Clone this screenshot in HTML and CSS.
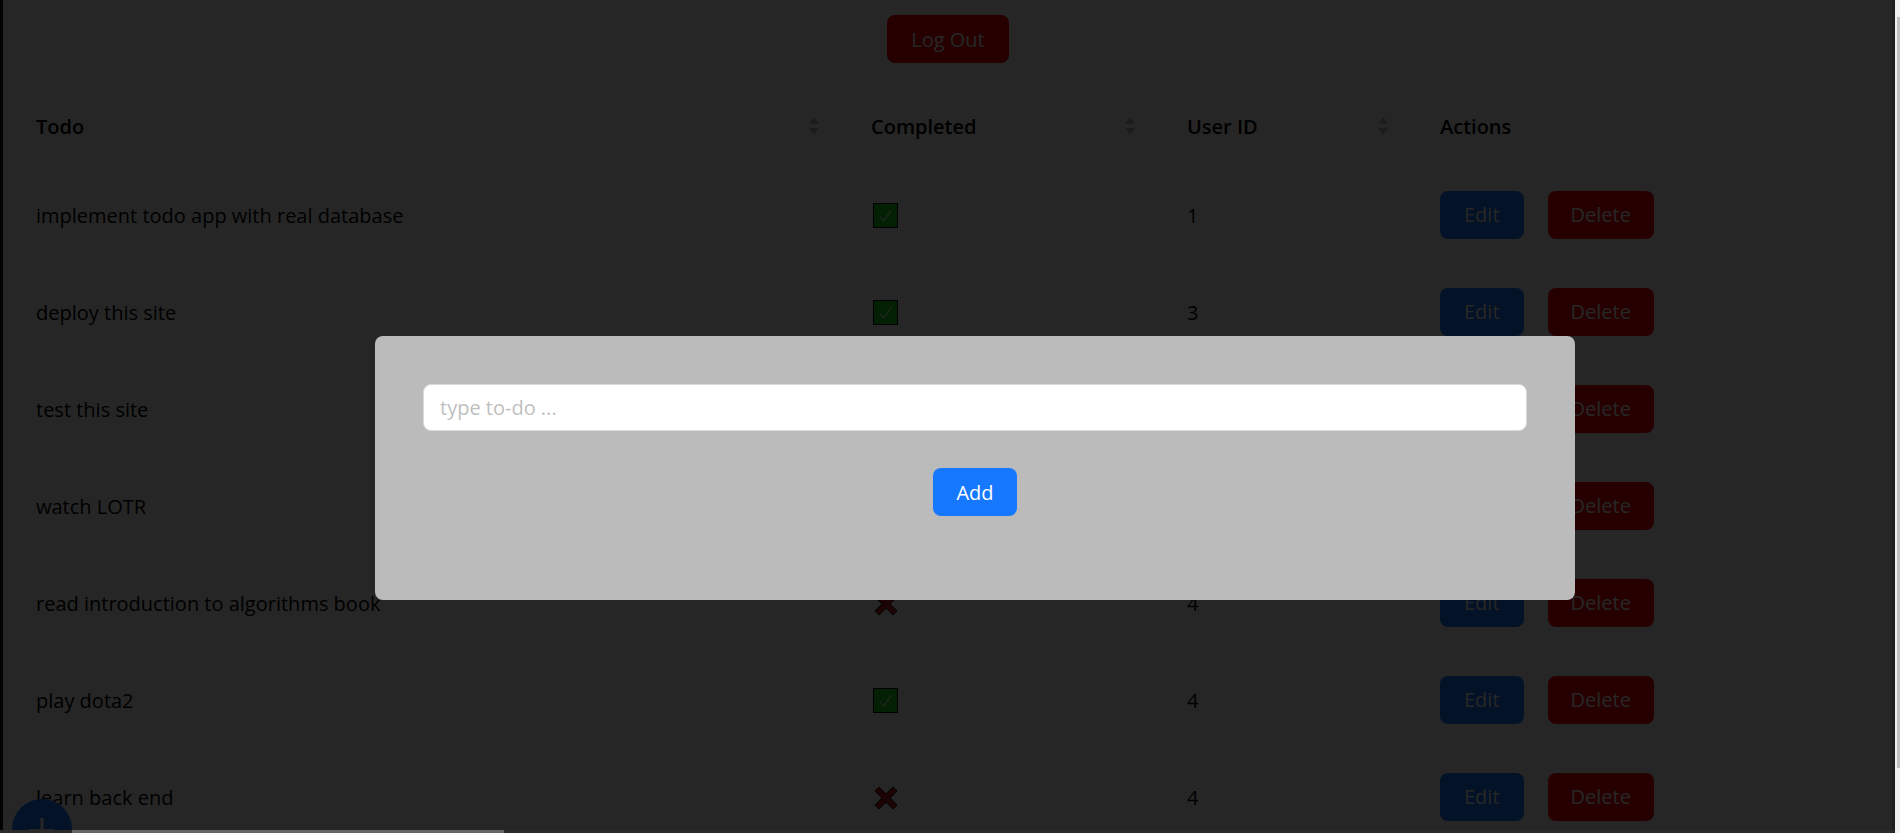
FILE: index.html
```html
<!DOCTYPE html>
<html lang="en">
<head>
    <meta charset="UTF-8">
    <meta name="viewport" content="width=device-width, initial-scale=1.0">
    <title>Todo App</title>
    <link rel="stylesheet" href="styles.css">
</head>
<body>
    <svg class="defs" width="0" height="0">
        <symbol id="icon-check" viewBox="0 0 24 24"><path d="M6 13 L10 17.5 L18 7" fill="none" stroke="#cfc" stroke-width="1.3"/></symbol>
        <symbol id="icon-cross" viewBox="0 0 24 24"><path d="M2.5 6 L6 2.5 L12 8.5 L18 2.5 L21.5 6 L15.5 12 L21.5 18 L18 21.5 L12 15.5 L6 21.5 L2.5 18 L8.5 12 Z"/></symbol>
    </svg>

    <div class="page">
        <div class="topbar">
            <button class="btn btn-red">Log Out</button>
        </div>

        <table class="todos">
            <thead>
                <tr>
                    <th class="col-todo"><div class="th-inner">Todo<span class="sorter"><i class="up"></i><i class="down"></i></span></div></th>
                    <th class="col-done"><div class="th-inner">Completed<span class="sorter"><i class="up"></i><i class="down"></i></span></div></th>
                    <th class="col-user"><div class="th-inner">User ID<span class="sorter"><i class="up"></i><i class="down"></i></span></div></th>
                    <th class="col-actions">Actions</th>
                </tr>
            </thead>
            <tbody>
                <tr>
                    <td>implement todo app with real database</td>
                    <td><svg class="check"><use href="#icon-check"/></svg></td>
                    <td>1</td>
                    <td class="actions"><button class="btn btn-blue">Edit</button><button class="btn btn-red btn-delete">Delete</button></td>
                </tr>
                <tr>
                    <td>deploy this site</td>
                    <td><svg class="check"><use href="#icon-check"/></svg></td>
                    <td>3</td>
                    <td class="actions"><button class="btn btn-blue">Edit</button><button class="btn btn-red btn-delete">Delete</button></td>
                </tr>
                <tr>
                    <td>test this site</td>
                    <td><svg class="check"><use href="#icon-check"/></svg></td>
                    <td>3</td>
                    <td class="actions"><button class="btn btn-blue">Edit</button><button class="btn btn-red btn-delete">Delete</button></td>
                </tr>
                <tr>
                    <td>watch LOTR</td>
                    <td><svg class="check"><use href="#icon-check"/></svg></td>
                    <td>4</td>
                    <td class="actions"><button class="btn btn-blue">Edit</button><button class="btn btn-red btn-delete">Delete</button></td>
                </tr>
                <tr>
                    <td>read introduction to algorithms book</td>
                    <td><svg class="cross"><use href="#icon-cross"/></svg></td>
                    <td>4</td>
                    <td class="actions"><button class="btn btn-blue">Edit</button><button class="btn btn-red btn-delete">Delete</button></td>
                </tr>
                <tr>
                    <td>play dota2</td>
                    <td><svg class="check"><use href="#icon-check"/></svg></td>
                    <td>4</td>
                    <td class="actions"><button class="btn btn-blue">Edit</button><button class="btn btn-red btn-delete">Delete</button></td>
                </tr>
                <tr>
                    <td>learn back end</td>
                    <td><svg class="cross"><use href="#icon-cross"/></svg></td>
                    <td>4</td>
                    <td class="actions"><button class="btn btn-blue">Edit</button><button class="btn btn-red btn-delete">Delete</button></td>
                </tr>
            </tbody>
        </table>

        <button class="fab" aria-label="Add todo">
            <svg class="fab-plus" viewBox="0 0 60 60"><path d="M28.5 19h3v11h11v3h-11v11h-3v-11h-11v-3h11z"/></svg>
        </button>
    </div>

    <div class="overlay"></div>

    <div class="modal">
        <input class="todo-input" type="text" placeholder="type to-do ...">
        <button class="btn btn-add">Add</button>
    </div>

    <div class="scroll-x"><div class="scroll-x-thumb"></div></div>
    <div class="scroll-y"><div class="scroll-y-thumb"></div></div>
</body>
</html>
```

FILE: styles.css
```css
* {
    box-sizing: border-box;
}
html, body {
    margin: 0;
    height: 100%;
    overflow: hidden;
}
body {
    background: #fff;
    color: #000;
    font-family: "Open Sans", "Noto Sans", sans-serif;
    font-size: 20px;
}
.defs {
    position: absolute;
}
.page {
    height: 100%;
    padding: 15px 5px 0 0;
    border-left: 3px solid #000;
    overflow: hidden;
    position: relative;
}
.topbar {
    display: flex;
    justify-content: center;
    padding-right: 2px;
}
.btn {
    height: 48px;
    padding: 0 24px;
    border: 0;
    border-radius: 8px;
    font-family: inherit;
    font-size: 20px;
    color: #fff;
}
.btn-red { background: #f00; }
.btn-blue { background: #1677ff; }
.btn-delete { padding: 0 23px; }
.btn + .btn { margin-left: 24px; }

.todos {
    width: 1892px;
    margin-top: 23px;
    border-collapse: collapse;
    table-layout: fixed;
}
.todos th, .todos td {
    height: 97px;
    padding: 2px 18px 0 34px;
    text-align: left;
    font-weight: 400;
}
.todos th:first-child, .todos td:first-child {
    padding-left: 33px;
}
.todos th {
    height: 80px;
    padding-top: 0;
    font-weight: 600;
}
.todos td.actions {
    padding-top: 0;
}
.col-todo { width: 834px; }
.col-done { width: 316px; }
.col-user { width: 253px; }
.th-inner {
    display: flex;
    align-items: center;
    justify-content: space-between;
}
.sorter {
    display: flex;
    flex-direction: column;
    gap: 4px;
}
.sorter i {
    display: block;
    width: 0;
    height: 0;
    border-left: 5px solid transparent;
    border-right: 5px solid transparent;
}
.sorter .up { border-bottom: 7px solid #bbb; }
.sorter .down { border-top: 7px solid #bbb; }

.check {
    display: block;
    width: 25px;
    height: 25px;
    margin-left: 2px;
    background: #1ed81e;
    border: 1px solid #000;
}
.cross {
    display: block;
    width: 28px;
    height: 28px;
    margin-left: 1px;
    fill: #b81e1e;
    stroke: #000;
    stroke-width: 0.8;
}
.fab {
    position: absolute;
    left: 9px;
    top: 799px;
    width: 60px;
    height: 60px;
    border: 0;
    border-radius: 50%;
    background: #1677ff;
    padding: 0;
}
.fab-plus {
    display: block;
    fill: #fff;
}

.overlay {
    position: fixed;
    top: 0;
    bottom: 0;
    left: 0;
    right: 5px;
    background: rgba(0, 0, 0, 0.85);
    border-right: 3px solid #1e1e1e;
}
.modal {
    position: fixed;
    left: 375px;
    top: 336px;
    width: 1200px;
    height: 264px;
    padding: 48px;
    background: #bbb;
    border-radius: 8px;
    display: flex;
    flex-direction: column;
    align-items: center;
    gap: 37px;
}
.todo-input {
    width: 100%;
    height: 47px;
    padding: 0 16px;
    border: 1px solid #d9d9d9;
    border-radius: 8px;
    background: #fff;
    font-family: inherit;
    font-size: 20px;
    outline: 0;
}
.todo-input::placeholder {
    color: #bfbfbf;
}
.btn-add {
    background: #1677ff;
    padding: 0 23px;
}

.scroll-x {
    position: fixed;
    left: 0;
    right: 5px;
    bottom: 0;
    height: 3px;
    background: #2a2a2a;
}
.scroll-x-thumb {
    width: 504px;
    height: 100%;
    background: linear-gradient(to right, #2a2a2a 72px, #666 72px);
}
.scroll-y {
    position: fixed;
    right: 0;
    top: 0;
    bottom: 0;
    width: 5px;
    padding: 17px 0 65px 2px;
    background: #f1f1f1;
}
.scroll-y-thumb {
    height: 100%;
    background: #c1c1c1;
}
```
